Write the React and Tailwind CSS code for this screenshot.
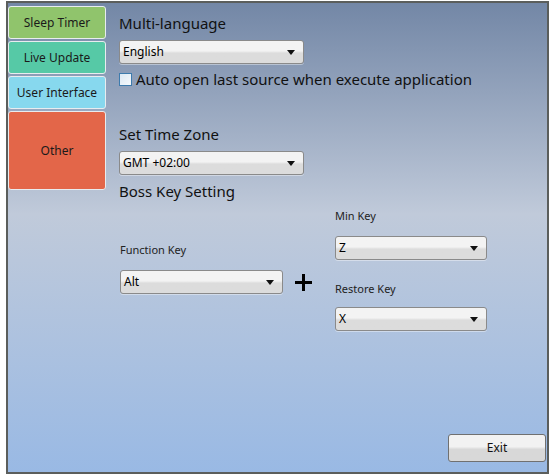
import React from 'react';

const tabs = [
  { label: 'Sleep Timer', cls: 'h-[33px] bg-[#90c46c]' },
  { label: 'Live Update', cls: 'h-[33px] bg-[#56c9a6]' },
  { label: 'User Interface', cls: 'h-[33px] bg-[#87d8ee]' },
  { label: 'Other', cls: 'h-[79px] bg-[#e36649]' },
];

function Combo({ value, className }) {
  return (
    <div
      className={`flex h-[24px] items-center justify-between rounded-[3px] border border-[#8a8a8a] bg-gradient-to-b from-[#f3f3f3] from-45% to-[#dcdcdc] to-55% pl-[3px] pr-[8px] text-[12px] text-black shadow-[0_1px_0_rgba(255,255,255,0.4)] ${className}`}
    >
      <span>{value}</span>
      <svg width="8" height="5" viewBox="0 0 8 5">
        <path d="M0 0 L8 0 L4 5 Z" fill="#111" />
      </svg>
    </div>
  );
}

export default function App() {
  return (
    <div className="h-[475px] w-[551px] bg-white pl-[6px] pt-[1px]" style={{ fontFamily: '"Noto Sans", "Open Sans", sans-serif' }}>
      <div className="flex h-[473px] w-[543px] border-2 border-[#5b5e5c] bg-gradient-to-b from-[#7387a6] via-[#c0cada] via-45% to-[#99b9e4]">
        {/* Tabs */}
        <div className="flex w-[98px] flex-col gap-[2px] pt-[3px]">
          {tabs.map((t) => (
            <div
              key={t.label}
              className={`flex items-center justify-center rounded-[3px] border border-[#e8ecef] text-[12px] text-[#1a1a1a] ${t.cls}`}
            >
              {t.label}
            </div>
          ))}
        </div>

        {/* Settings */}
        <div className="flex flex-1 flex-col pl-[13px] pr-[1px] pb-[10px]">
          <div className="mt-[10px] text-[15px] leading-[20px] text-[#111]">Multi-language</div>
          <Combo value="English" className="mt-[7px] w-[185px]" />
          <div className="mt-[5px] flex items-center gap-[4px] text-[15px] leading-[20px] text-[#111]">
            <span className="h-[13px] w-[13px] border border-[#3d7bad] bg-gradient-to-br from-[#dbe8f3] to-[#f6f9fc]" />
            <span>Auto open last source when execute application</span>
          </div>

          <div className="mt-[35px] text-[15px] leading-[20px] text-[#111]">Set Time Zone</div>
          <Combo value="GMT +02:00" className="mt-[7px] w-[185px]" />
          <div className="mt-[6px] text-[15px] leading-[20px] text-[#111]">Boss Key Setting</div>

          <div className="mt-[7px] flex">
            <div className="flex w-[216px] flex-col pt-[34px]">
              <div className="pl-[1px] text-[11px] leading-[16px] text-[#222]">Function Key</div>
              <div className="mt-[12px] flex items-center">
                <Combo value="Alt" className="ml-[1px] w-[163px]" />
                <svg className="ml-[12px]" width="17" height="17" viewBox="0 0 17 17">
                  <path d="M7 0 H10 V7 H17 V10 H10 V17 H7 V10 H0 V7 H7 Z" fill="#000" />
                </svg>
              </div>
            </div>
            <div className="flex flex-col">
              <div className="text-[11px] leading-[16px] text-[#222]">Min Key</div>
              <Combo value="Z" className="mt-[12px] w-[152px]" />
              <div className="mt-[21px] text-[11px] leading-[16px] text-[#222]">Restore Key</div>
              <Combo value="X" className="mt-[10px] w-[152px]" />
            </div>
          </div>

          <button className="ml-auto mt-auto flex h-[28px] w-[98px] items-center justify-center rounded-[3px] border border-[#707070] bg-gradient-to-b from-[#f2f2f2] from-45% to-[#d8d8d8] to-55% text-[12px] text-[#111]">
            Exit
          </button>
        </div>
      </div>
    </div>
  );
}
